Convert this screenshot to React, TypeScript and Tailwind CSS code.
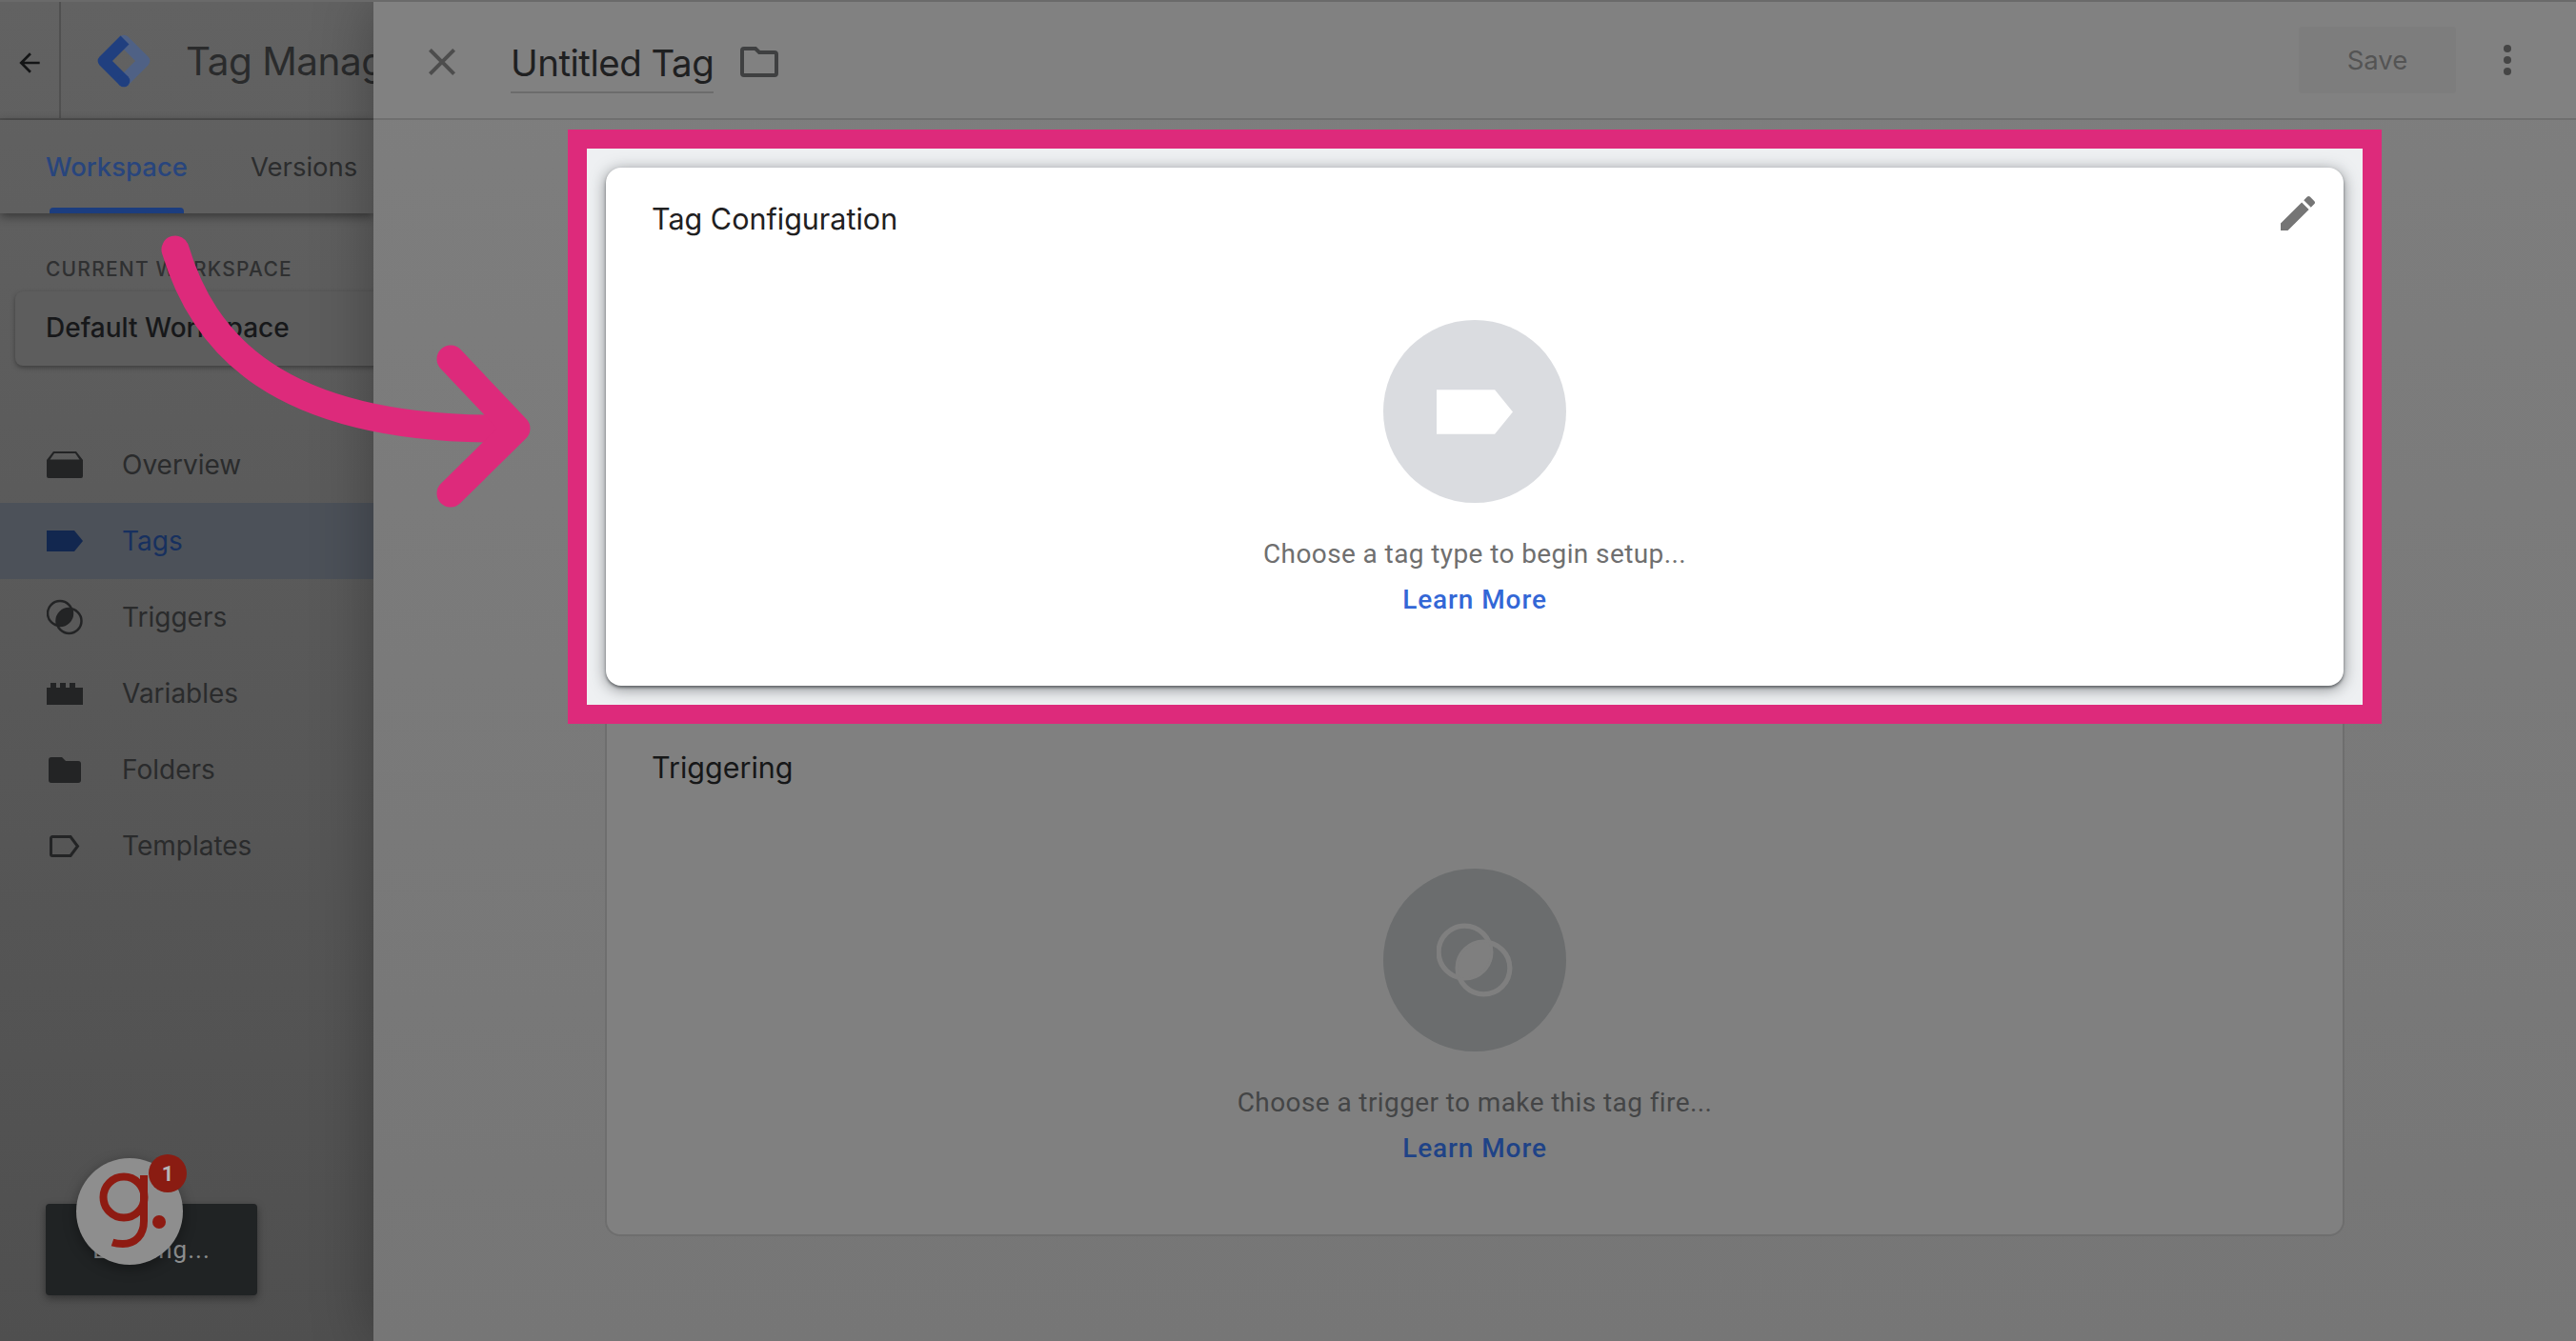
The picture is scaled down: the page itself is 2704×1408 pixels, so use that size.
import { ReactNode } from 'react';

const NAV_FONT = "font-['Inter',sans-serif]";
const BODY_FONT = "font-['Roboto',sans-serif]";

function TagShape({ className = '' }: { className?: string }) {
  return (
    <svg viewBox="0 0 38 22" className={className} fill="currentColor">
      <path d="M0 0h29l9 11-9 11H0z" />
    </svg>
  );
}

function GtmLogo() {
  return (
    <svg viewBox="0 0 60 60" className="h-[60px] w-[60px]" fill="none" strokeWidth="12.700" strokeLinejoin="round">
      <path d="M30 9 51 30 30 51" stroke="#4f6185" strokeLinecap="round" />
      <path d="M31 8 9 30 30 51" stroke="#203f7f" />
      <circle cx="30" cy="51" r="6.350" fill="#203f7f" />
    </svg>
  );
}

function TriggerRings({ className = '' }: { className?: string }) {
  return (
    <svg viewBox="0 0 38 38" className={className} fill="none" stroke="currentColor" strokeWidth="2.500">
      <clipPath id="trigger-overlap">
        <circle cx="14" cy="15" r="13" />
      </clipPath>
      <circle cx="14" cy="15" r="13" />
      <circle cx="23.500" cy="23" r="13" />
      <circle cx="23.500" cy="23" r="13" fill="currentColor" stroke="none" clipPath="url(#trigger-overlap)" />
    </svg>
  );
}

type NavItem = { label: string; icon: ReactNode; active?: boolean };

const navItems: NavItem[] = [
  {
    label: 'Overview',
    icon: (
      <svg viewBox="0 0 38 28" className="h-[28px] w-[38px]" fill="currentColor" fillRule="evenodd">
        <path d="M7 0h24l7 9v17a2 2 0 0 1-2 2H2a2 2 0 0 1-2-2V9zM8 2 3.500 8.500h31L30 2z" />
      </svg>
    ),
  },
  { label: 'Tags', active: true, icon: <TagShape className="h-[22px] w-[38px]" /> },
  { label: 'Triggers', icon: <TriggerRings className="h-[38px] w-[38px]" /> },
  {
    label: 'Variables',
    icon: (
      <svg viewBox="0 0 38 23" className="h-[23px] w-[38px]" fill="currentColor">
        <path d="M0 5h4V0h6v5h4V0h6v5h4V0h6v5h8v18H0z" />
      </svg>
    ),
  },
  {
    label: 'Folders',
    icon: (
      <svg viewBox="0 0 34 27" className="h-[27px] w-[34px]" fill="currentColor">
        <path d="M3 0h11l4 4h13a3 3 0 0 1 3 3v17a3 3 0 0 1-3 3H3a3 3 0 0 1-3-3V3a3 3 0 0 1 3-3z" />
      </svg>
    ),
  },
  {
    label: 'Templates',
    icon: (
      <svg viewBox="0 0 32 23" className="h-[23px] w-[32px]" fill="none" stroke="currentColor" strokeWidth="3">
        <path d="M3 1.500h19l7.500 10-7.500 10H3a1.500 1.500 0 0 1-1.500-1.500V3A1.500 1.500 0 0 1 3 1.500z" />
      </svg>
    ),
  },
];

function Sidebar() {
  return (
    <aside className="flex h-full w-[392px] shrink-0 flex-col overflow-hidden bg-gradient-to-b from-[#626262] to-[#4f4f4f]">
      <div className="flex h-[124px] shrink-0 items-center whitespace-nowrap border-b-2 border-[#505050]">
        <div className="flex h-full w-[64px] shrink-0 items-center justify-center border-r-2 border-[#505050]">
          <svg viewBox="0 0 24 24" className="mt-[6px] h-[32px] w-[32px] text-[#141516]" fill="currentColor">
            <path d="M20 11H7.830l5.590-5.590L12 4l-8 8 8 8 1.410-1.410L7.830 13H20z" />
          </svg>
        </div>
        <div className="ml-[36px] mt-[2px] shrink-0">
          <GtmLogo />
        </div>
        <span className={`ml-[35px] mt-[4px] text-[40.500px] tracking-[-0.5px] text-[#2a2b2c] ${NAV_FONT}`}>Tag Manager</span>
      </div>

      <div className={`flex h-[98px] shrink-0 items-start gap-[66px] whitespace-nowrap pl-[48px] pt-[29px] text-[27.500px] shadow-[0_3px_10px_rgba(0,0,0,0.45)] ${NAV_FONT}`}>
        <div className="relative h-[69px] font-medium text-[#28457d]">
          Workspace
          <span className="absolute bottom-0 left-[4px] right-[4px] h-[6px] rounded-t-[4px] bg-[#1c3d7f]" />
        </div>
        <div className="text-[#2c2d2e]">Versions</div>
      </div>

      <div className={`ml-[48px] mt-[48px] shrink-0 whitespace-nowrap text-[21px] font-medium leading-[21px] tracking-[1.200px] text-[#2f3031] ${NAV_FONT}`}>
        CURRENT WORKSPACE
      </div>
      <div className={`ml-[16px] mt-[13px] flex h-[78px] w-[420px] shrink-0 items-center whitespace-nowrap rounded-[8px] bg-[#5d5d5d] pb-[3px] pl-[32px] text-[28px] font-medium text-[#17181a] shadow-[0_2px_5px_rgba(0,0,0,0.35)] ${NAV_FONT}`}>
        Default Workspace
      </div>

      <nav className={`mt-[64px] flex flex-col text-[28px] ${NAV_FONT}`}>
        {navItems.map((item) => (
          <div
            key={item.label}
            className={`flex h-[80px] items-center ${item.active ? 'bg-[#4c5159] text-[#17305f]' : 'text-[#2a2b2c]'}`}
          >
            <span className={`ml-[49px] mr-[41px] flex w-[38px] shrink-0 justify-center ${item.active ? 'text-[#12274f]' : 'text-[#232425]'}`}>
              {item.icon}
            </span>
            {item.label}
          </div>
        ))}
      </nav>

      <div className={`ml-[48px] mt-auto mb-[48px] flex h-[96px] w-[222px] shrink-0 items-center justify-center rounded-[4px] bg-[#202324] text-[26px] tracking-[1px] text-[#8d8f90] shadow-[0_3px_8px_rgba(0,0,0,0.4)] ${BODY_FONT}`}>
        Loading...
      </div>
    </aside>
  );
}

function TopBar() {
  return (
    <header className="flex h-[124px] shrink-0 items-center border-b-2 border-[#6f6f6f] bg-[#818181] pl-[48px]">
      <svg viewBox="0 0 24 24" className="mt-[4px] h-[48px] w-[48px] text-[#4d4d4d]" fill="currentColor">
        <path d="M19 6.410 17.590 5 12 10.590 6.410 5 5 6.410 10.590 12 5 17.590 6.410 19 12 13.410 17.590 19 19 17.590 13.410 12z" />
      </svg>
      <span className={`ml-[48px] mt-[12px] border-b-2 border-[#6c6c6c] pb-[4px] text-[38.500px] leading-[52px] tracking-[-0.5px] text-[#1f2021] ${NAV_FONT}`}>
        Untitled Tag
      </span>
      <svg viewBox="0 0 40 32" className="ml-[28px] mt-[4px] h-[32px] w-[40px] text-[#3f4041]" fill="none" stroke="currentColor" strokeWidth="4">
        <path d="M4 2h12l4 4h16a2 2 0 0 1 2 2v20a2 2 0 0 1-2 2H4a2 2 0 0 1-2-2V4a2 2 0 0 1 2-2z" />
      </svg>
      <button className={`ml-auto flex h-[70px] w-[165px] items-center justify-center rounded-[4px] bg-[#7d7d7d] pt-[2px] text-[27.500px] text-[#545454] ${NAV_FONT}`}>
        Save
      </button>
      <div className="ml-[50px] mr-[68px] flex flex-col gap-[4px]">
        <span className="h-[8px] w-[8px] rounded-full bg-[#454545]" />
        <span className="h-[8px] w-[8px] rounded-full bg-[#454545]" />
        <span className="h-[8px] w-[8px] rounded-full bg-[#454545]" />
      </div>
    </header>
  );
}

function TagConfigCard() {
  return (
    <div className="overflow-hidden border-[20px] border-[#dd2a7b] bg-[#eef0f2] p-[20px]">
      <div className="relative flex h-[544px] flex-col items-center rounded-[16px] bg-white shadow-[0_2px_3px_rgba(40,44,47,0.55),0_3px_16px_rgba(60,64,67,0.6)]">
        <h2 className={`absolute left-[48px] top-[34px] text-[30.500px] leading-[40px] text-[#1f2021] ${NAV_FONT}`}>Tag Configuration</h2>
        <svg viewBox="0 0 24 24" className="absolute right-[24px] top-[24px] h-[48px] w-[48px] text-[#757575]" fill="currentColor">
          <path d="M3 17.250V21h3.750L17.810 9.940l-3.750-3.750L3 17.250zM20.710 7.040c.39-.39.39-1.020 0-1.410l-2.340-2.340c-.39-.39-1.020-.39-1.410 0l-1.830 1.830 3.750 3.750 1.830-1.830z" />
        </svg>
        <div className="mt-[160px] flex h-[192px] w-[192px] items-center justify-center rounded-full bg-[#dadce0]">
          <TagShape className="h-[47px] w-[80px] text-white" />
        </div>
        <p className={`mt-[36px] text-[28px] leading-[36px] tracking-[0.400px] text-[#6f6f6f] ${BODY_FONT}`}>Choose a tag type to begin setup...</p>
        <a className={`mt-[12px] text-[28px] font-medium leading-[36px] tracking-[0.900px] text-[#3367d6] ${BODY_FONT}`}>Learn More</a>
      </div>
    </div>
  );
}

function TriggeringCard() {
  return (
    <div className="relative mx-[39px] flex h-[538px] flex-col items-center rounded-b-[16px] border-2 border-t-0 border-[#6e6e6e] bg-[#808080]">
      <h2 className={`absolute left-[47px] top-[26px] text-[30.500px] leading-[40px] text-[#161718] ${NAV_FONT}`}>Triggering</h2>
      <div className="mt-[152px] flex h-[192px] w-[192px] items-center justify-center rounded-full bg-[#6b6d6e]">
        <TriggerRings className="h-[80px] w-[80px] text-[#7f7f7f]" />
      </div>
      <p className={`mt-[36px] text-[28px] leading-[36px] tracking-[0.400px] text-[#444546] ${BODY_FONT}`}>Choose a trigger to make this tag fire...</p>
      <a className={`mt-[12px] text-[28px] font-medium leading-[36px] tracking-[0.900px] text-[#1f4387] ${BODY_FONT}`}>Learn More</a>
    </div>
  );
}

function Widget() {
  return (
    <div className="absolute left-[80px] top-[1214px] h-[112px] w-[112px] rounded-full bg-[#8e8e8e] shadow-[0_4px_14px_rgba(0,0,0,0.35)]">
      <svg viewBox="0 0 112 112" className="h-full w-full" fill="none" stroke="#8e1b12" strokeWidth="8">
        <circle cx="50" cy="41" r="21.500" />
        <path d="M71 18V66c0 15-9 24-22 24-4 0-8-.5-11-1.500" />
        <circle cx="87" cy="67" r="7" fill="#8e1b12" stroke="none" />
      </svg>
      <span className={`absolute -right-[4px] -top-[4px] flex h-[40px] w-[40px] items-center justify-center rounded-full bg-[#8a1c12] text-[22px] font-bold text-[#b5b5b5] ${BODY_FONT}`}>
        1
      </span>
    </div>
  );
}

function Arrow() {
  return (
    <svg viewBox="0 0 2704 1408" className="pointer-events-none absolute left-0 top-[-2px] h-[1408px] w-[2704px]" fill="none" stroke="#dd2a7b" strokeWidth="29" strokeLinecap="round" strokeLinejoin="round">
      <path d="M184 262C212 355 285 455 540 450" />
      <path d="M473 377 542 450 473 518" />
    </svg>
  );
}

export default function App() {
  return (
    <div className="relative flex h-[1408px] w-[2704px] overflow-hidden border-t-2 border-[#6a6a6a] bg-[#7c7c7c]">
      <Sidebar />
      <main className="relative z-10 flex h-full flex-1 flex-col bg-gradient-to-b from-[#7e7e7e] to-[#767676] shadow-[0_0_60px_rgba(0,0,0,0.3)]">
        <TopBar />
        <div className="mt-[10px] px-[204px]">
          <TagConfigCard />
          <TriggeringCard />
        </div>
      </main>
      <div className="absolute inset-0 z-20">
        <Widget />
        <Arrow />
      </div>
    </div>
  );
}
